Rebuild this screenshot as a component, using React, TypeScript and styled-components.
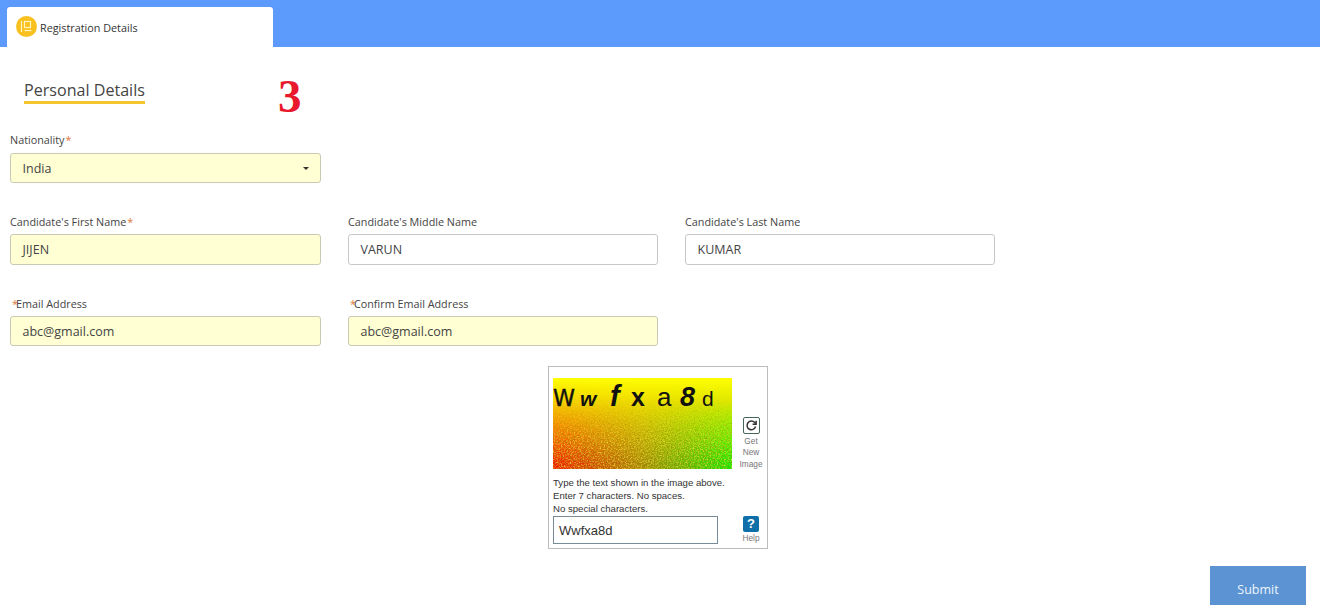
import React from "react";
import styled, { createGlobalStyle } from "styled-components";

const Global = createGlobalStyle`
  html, body { margin: 0; padding: 0; background: #fff; }
  body { font-family: "Open Sans", "Liberation Sans", sans-serif; color: #3a3a3a; }
`;
const Page = styled.div`
  width: 1320px; height: 605px; overflow: hidden; display: flex; flex-direction: column;
`;
const TopBar = styled.header`
  height: 40px; padding: 7px 0 0 7px; background: #5c9bfb; display: flex; flex: none;
`;
const Tab = styled.div`
  width: 266px; height: 40px; background: #fff; border-radius: 3px 3px 0 0; box-sizing: border-box;
  padding: 0 0 0 9px; display: flex; align-items: center; gap: 3px; font-size: 10.8px; color: #333;
`;
const TabIcon = styled.span`
  width: 21px; height: 21px; border-radius: 50%; background: #f9c11f; display: flex;
  align-items: center; justify-content: center; margin-top: -1px;
`;
const TitleRow = styled.div`
  height: 86px; box-sizing: border-box; padding: 31px 0 0 24px; display: flex; align-items: flex-start; flex: none;
`;
const SectionTitle = styled.h2`
  margin: 0; font-size: 16.1px; font-weight: 400; line-height: 24px; height: 23px; width: 121px;
  border-bottom: 3px solid #f5c52f; color: #444; white-space: nowrap;
`;
const BigNumber = styled.span`
  font-family: "Liberation Serif", serif; font-weight: 700; font-size: 47px; line-height: 40px;
  color: #e8192c; margin: -2px 0 0 133px;
`;
const Grid = styled.div`
  display: grid; grid-template-columns: 311px 310px 310px; column-gap: 27px; padding-left: 10px; flex: none;
`;
const Field = styled.div<{ $h: number }>`
  height: ${(p) => p.$h}px; display: flex; flex-direction: column;
`;
const Label = styled.label`
  font-size: 10.8px; line-height: 14px; height: 14px; color: #444; white-space: nowrap;
`;
const Star = styled.span<{ $lead?: boolean }>`
  color: #e0763a; margin: ${(p) => (p.$lead ? "0 -2px 0 2px" : "0 0 0 1px")};
`;
const Input = styled.div<{ $req?: boolean; $h?: number }>`
  height: ${(p) => p.$h ?? 30}px; margin-top: 5px; box-sizing: border-box; border: 1px solid ${(p) => (p.$req ? "#c9c9b4" : "#c8c8c8")};
  border-radius: 3px; background: ${(p) => (p.$req ? "#ffffd3" : "#fff")}; display: flex; align-items: center;
  justify-content: space-between; padding: 0 12px 0 11.5px; font-size: 12.5px; color: #444;
`;
const SelectBox = styled(Input)`
  margin-top: 6px;
`;
const Caret = styled.span`
  width: 0; height: 0; border-left: 3px solid transparent; border-right: 3px solid transparent;
  border-top: 3px solid #333; margin-right: -1px;
`;
const CaptchaRow = styled.div`
  display: flex; padding: 5px 0 0 548px; flex: none;
`;
const CaptchaBox = styled.div`
  width: 220px; height: 183px; box-sizing: border-box; border: 1px solid #bcbcbc; padding: 11px 4px 0 4px;
  font-family: "Liberation Sans", Arial, sans-serif; display: flex; flex-direction: column;
`;
const CaptchaTop = styled.div`
  display: flex; height: 92px;
`;
const CaptchaSvg = styled.svg`
  width: 179px; height: 91px; display: block; flex: none;
`;
const SideTool = styled.div`
  width: 24px; flex: none; display: flex; flex-direction: column; align-items: center; justify-content: flex-end;
  font-size: 8.3px; line-height: 11.5px; color: #777; text-align: center; margin-left: 7px;
`;
const RefreshBtn = styled.span`
  width: 15px; height: 15px; border: 1px solid #46665a; border-radius: 2px; display: flex; align-items: center;
  justify-content: center; margin-bottom: 2px; background: #fff;
`;
const Hint = styled.div`
  font-size: 9.6px; line-height: 13px; color: #333; margin-top: 6px;
`;
const CaptchaBottom = styled.div`
  display: flex; align-items: flex-start;
`;
const CaptchaInput = styled.div`
  width: 165px; height: 28px; box-sizing: border-box; border: 1px solid #778b99; padding-left: 5px;
  font-size: 13px; line-height: 27px; color: #333; margin-top: 1px; flex: none;
`;
const HelpTool = styled(SideTool)`
  margin-left: 21px; justify-content: flex-start; padding-top: 1px;
`;
const HelpBtn = styled.span`
  width: 16px; height: 16px; border-radius: 2px; background: #0f6fa8; color: #fff; font-weight: 700; font-size: 13px;
  line-height: 16px; margin-bottom: 1px;
`;
const Footer = styled.div`
  display: flex; justify-content: flex-end; padding: 17px 14px 0 0; flex: none;
`;
const Submit = styled.button`
  width: 96px; height: 39px; border: 0; background: #5b93d3; color: #eef5fc; font-family: inherit; font-size: 12.5px;
  padding: 7px 0 0 0;
`;

const TabGlyph = () => (
  <svg width="13" height="13" viewBox="0 0 13 13" fill="none" stroke="#fff3c4" strokeWidth="1.2">
    <path d="M1.5 1v11" />
    <rect x="4.5" y="1.5" width="6" height="6" />
    <path d="M4.5 10.5h7" />
  </svg>
);

const Captcha = () => (
  <CaptchaSvg viewBox="0 0 179 91">
    <defs>
      <linearGradient id="h" x1="0" x2="1" y1="0" y2="0">
        <stop offset="0" stopColor="#ff0c00" />
        <stop offset="0.5" stopColor="#a88a08" />
        <stop offset="1" stopColor="#08f400" />
      </linearGradient>
      <linearGradient id="v" x1="0" x2="0" y1="0" y2="1">
        <stop offset="0" stopColor="#ffff00" stopOpacity="1" />
        <stop offset="0.25" stopColor="#f6e800" stopOpacity="0.9" />
        <stop offset="0.95" stopColor="#ffff00" stopOpacity="0" />
      </linearGradient>
      <filter id="n" x="0" y="0" width="100%" height="100%">
        <feTurbulence type="fractalNoise" baseFrequency="0.7" numOctaves="2" seed="4" />
        <feColorMatrix values="0 0 0 0 0.95  0 0 0 0 0.8  0 0 0 0 0.05  2.6 0 0 0 -1.1" />
      </filter>
      <filter id="d" x="0" y="0" width="100%" height="100%">
        <feTurbulence type="fractalNoise" baseFrequency="0.75" numOctaves="2" seed="9" />
        <feColorMatrix values="0 0 0 0 0.3  0 0 0 0 0.22  0 0 0 0 0  2.6 0 0 0 -1.05" />
      </filter>
      <linearGradient id="fade" x1="0" x2="0" y1="0" y2="1">
        <stop offset="0.2" stopColor="#fff" stopOpacity="0" />
        <stop offset="0.7" stopColor="#fff" stopOpacity="1" />
      </linearGradient>
      <mask id="m"><rect width="179" height="91" fill="url(#fade)" /></mask>
    </defs>
    <rect width="179" height="91" fill="url(#h)" />
    <rect width="179" height="91" fill="url(#v)" />
    <rect width="179" height="91" filter="url(#d)" mask="url(#m)" opacity="0.65" />
    <rect width="179" height="91" filter="url(#n)" mask="url(#m)" opacity="0.7" />
    <g fill="#111" fontFamily="'Liberation Sans', sans-serif">
      <text x="0" y="28" fontSize="23" fontFamily="'DejaVu Sans', sans-serif" fontWeight="500" stroke="#111" strokeWidth="0.4" textLength="22" lengthAdjust="spacingAndGlyphs">W</text>
      <text x="27" y="28" fontSize="21" fontStyle="italic" fontWeight="700">w</text>
      <text x="57" y="28" fontSize="29" fontStyle="italic" fontWeight="700">f</text>
      <text x="78" y="28" fontSize="25" fontWeight="700">x</text>
      <text x="104" y="28" fontSize="26">a</text>
      <text x="127" y="28" fontSize="27" fontStyle="italic" fontWeight="700">8</text>
      <text x="149" y="28" fontSize="21">d</text>
    </g>
  </CaptchaSvg>
);

const Rows: { h: number; rowH: number; fields: { label: string; value: string; req?: boolean; lead?: boolean }[] }[] = [
  {
    h: 31,
    rowH: 82,
    fields: [
      { label: "Candidate's First Name", value: "JIJEN", req: true },
      { label: "Candidate's Middle Name", value: "VARUN" },
      { label: "Candidate's Last Name", value: "KUMAR" },
    ],
  },
  {
    h: 30,
    rowH: 64,
    fields: [
      { label: "Email Address", value: "abc@gmail.com", req: true, lead: true },
      { label: "Confirm Email Address", value: "abc@gmail.com", req: true, lead: true },
    ],
  },
];

export default function App() {
  return (
    <Page>
      <Global />
      <TopBar>
        <Tab>
          <TabIcon><TabGlyph /></TabIcon>
          Registration Details
        </Tab>
      </TopBar>
      <TitleRow>
        <SectionTitle>Personal Details</SectionTitle>
        <BigNumber>3</BigNumber>
      </TitleRow>
      <Grid>
        <Field $h={82}>
          <Label>Nationality<Star>*</Star></Label>
          <SelectBox $req>India<Caret /></SelectBox>
        </Field>
      </Grid>
      {Rows.map((row) => (
        <Grid key={row.fields[0].label}>
          {row.fields.map((f) => (
            <Field key={f.label} $h={row.rowH}>
              <Label>
                {f.lead && <Star $lead>*</Star>}
                {f.label}
                {f.req && !f.lead && <Star>*</Star>}
              </Label>
              <Input $req={f.req} $h={row.h}>{f.value}</Input>
            </Field>
          ))}
        </Grid>
      ))}
      <CaptchaRow>
        <CaptchaBox>
          <CaptchaTop>
            <Captcha />
            <SideTool>
              <RefreshBtn>
                <svg width="13" height="13" viewBox="0 0 24 24" fill="none" stroke="#333" strokeWidth="2.8">
                  <path d="M19.5 14a8 8 0 1 1-1.6-7.4L20 9" />
                  <path d="M20.5 3v6.5H14" />
                </svg>
              </RefreshBtn>
              Get<br />New<br />Image
            </SideTool>
          </CaptchaTop>
          <Hint>
            Type the text shown in the image above.<br />
            Enter 7 characters. No spaces.<br />
            No special characters.
          </Hint>
          <CaptchaBottom>
            <CaptchaInput>Wwfxa8d</CaptchaInput>
            <HelpTool>
              <HelpBtn>?</HelpBtn>
              Help
            </HelpTool>
          </CaptchaBottom>
        </CaptchaBox>
      </CaptchaRow>
      <Footer>
        <Submit>Submit</Submit>
      </Footer>
    </Page>
  );
}
